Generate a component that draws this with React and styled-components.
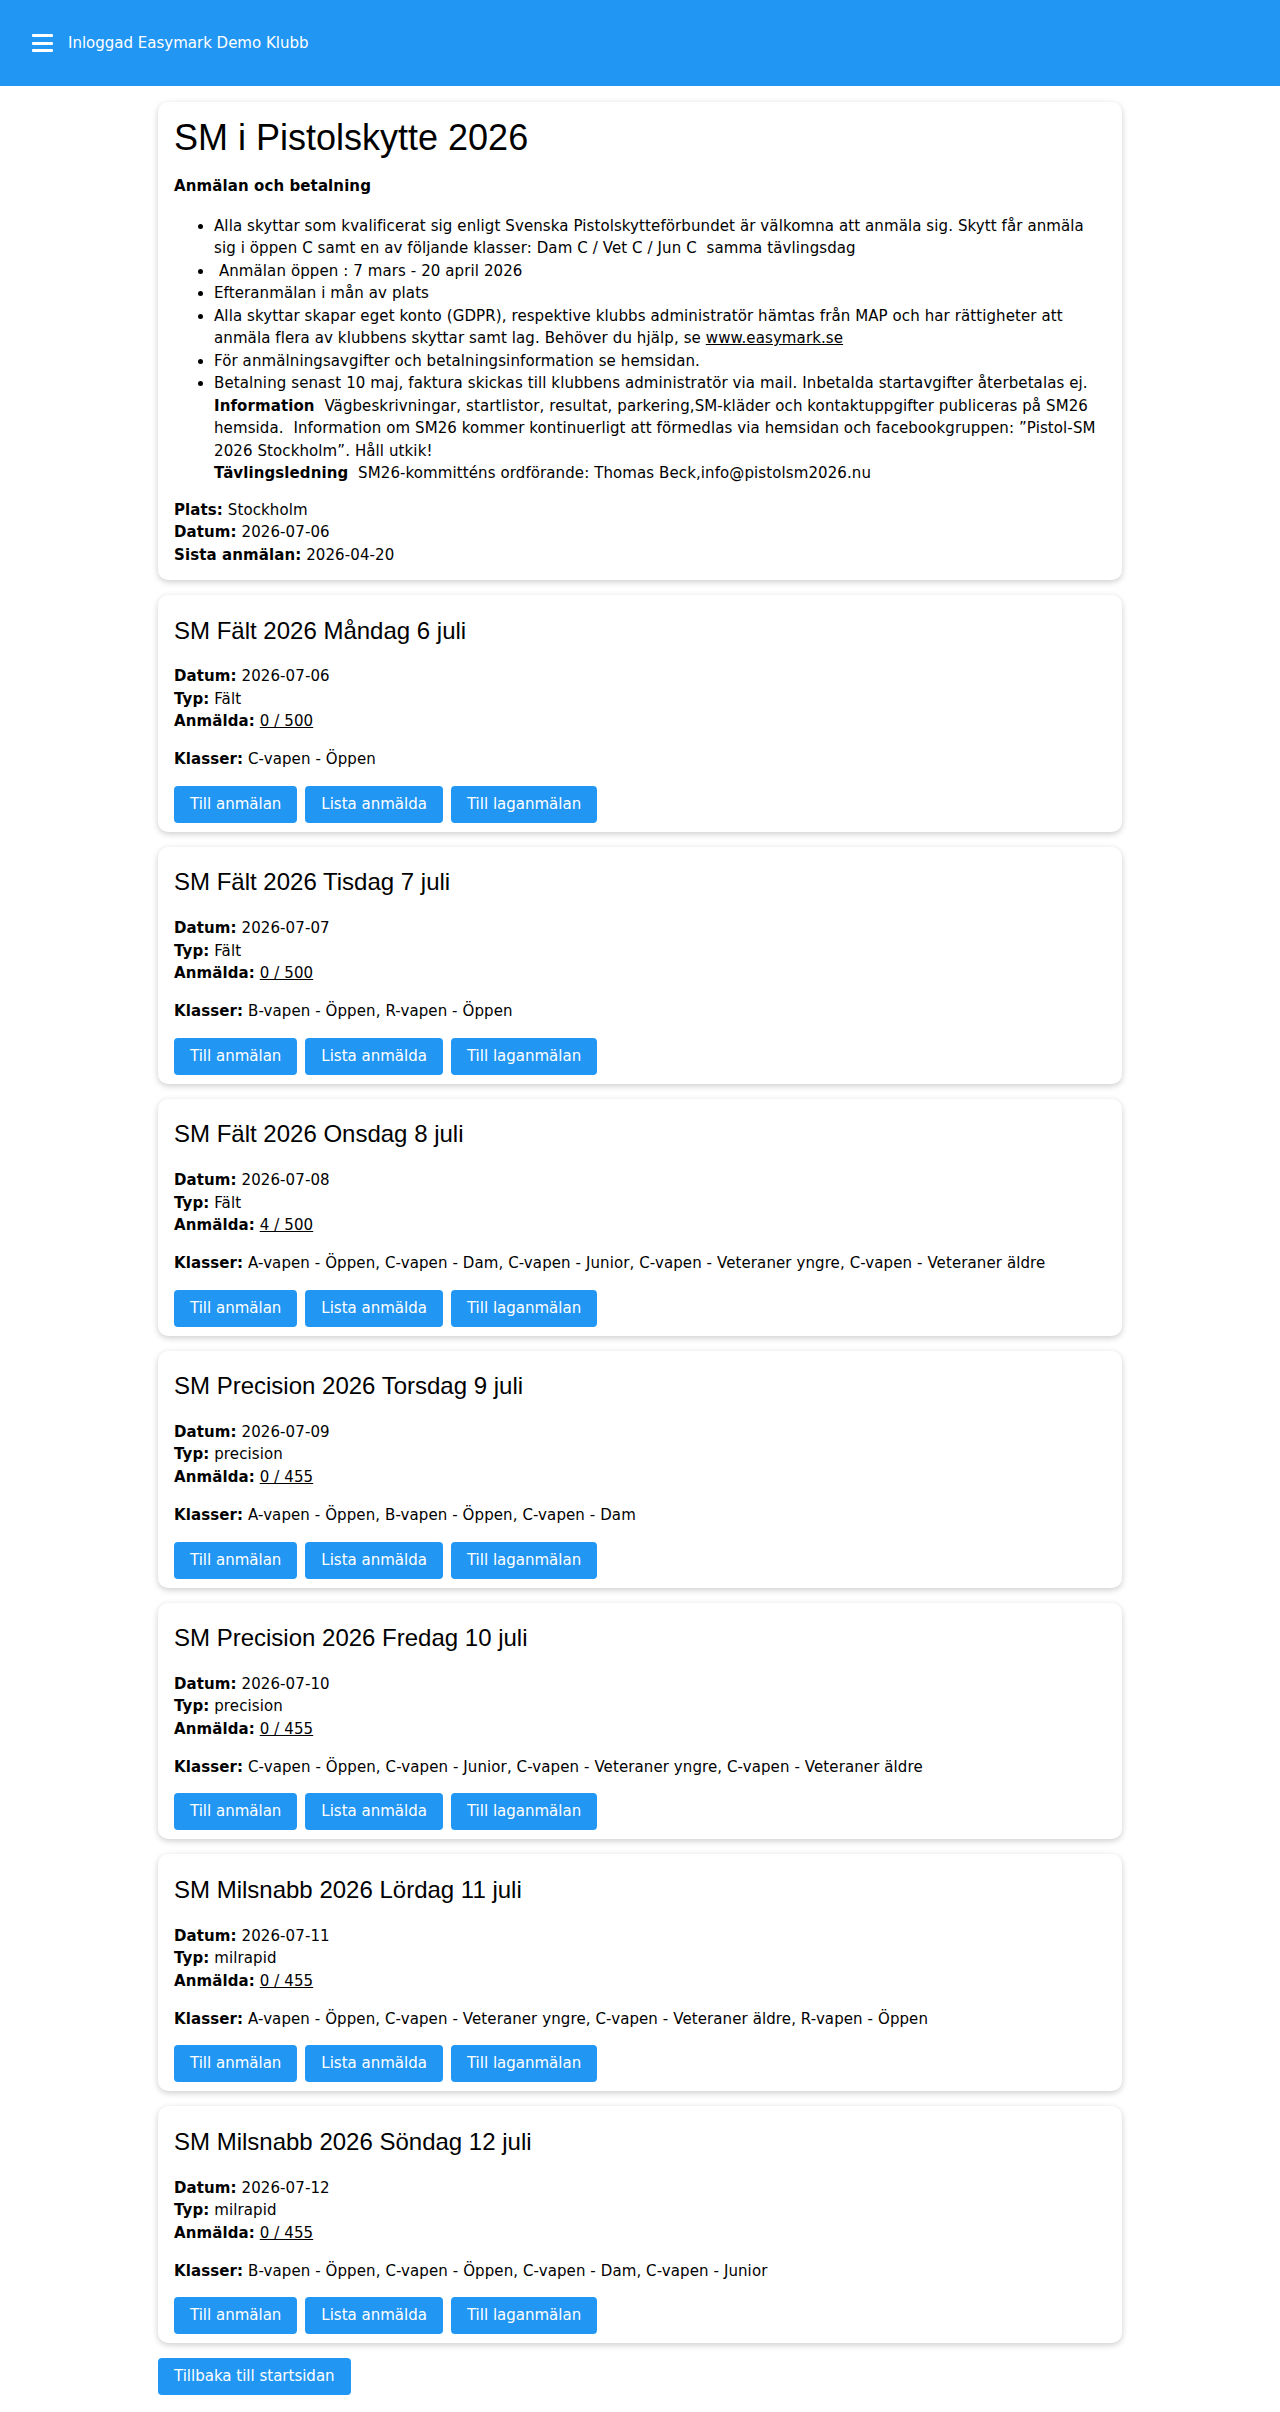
import React from 'react';
import styled, { createGlobalStyle } from 'styled-components';

const GlobalStyle = createGlobalStyle`
  body {
    margin: 0;
    background: #fff;
    color: #000;
    font-family: "DejaVu Sans", Verdana, sans-serif;
    font-size: 15px;
    line-height: 1.5;
    letter-spacing: 0.1px;
  }
`;

const TopBar = styled.header`
  height: 86px;
  background: #2196f3;
  display: flex;
  align-items: center;
  padding-left: 32px;
  gap: 15px;
  color: #fff;
`;

const MenuIcon = styled.div`
  width: 21px;
  height: 18px;
  display: flex;
  flex-direction: column;
  justify-content: space-between;

  span {
    display: block;
    height: 3px;
    border-radius: 1px;
    background: #fff;
  }
`;

const TopTitle = styled.div`
  font-size: 15px;
  line-height: 20px;
  letter-spacing: 0;
`;

const Main = styled.main`
  width: 964px;
  margin: 16px auto 0;
  padding-bottom: 17px;
  display: flex;
  flex-direction: column;
  gap: 15px;
`;

const Card = styled.section`
  background: #fff;
  border-radius: 10px;
  box-shadow: 0 2px 6px rgba(0, 0, 0, 0.2);
  padding: ${p => (p.$intro ? '16px 16px 14px' : '21.5px 16px 9px')};
`;

const Title = styled.h1`
  margin: 0 0 ${p => (p.$big ? '17px' : '20px')};
  font-family: "Liberation Sans", Arial, sans-serif;
  font-weight: 400;
  letter-spacing: 0;
  font-size: ${p => (p.$big ? '36px' : '24px')};
  line-height: ${p => (p.$big ? '40px' : '1.2')};
`;

const Lead = styled.p`
  margin: 0 0 17px;
  font-weight: 700;
`;

const Bullets = styled.ul`
  margin: 0 0 14px;
  padding-left: 40px;
`;

const Line = styled.div``;

const Block = styled.div`
  margin-bottom: ${p => p.$gap || '0'};
`;

const Link = styled.a`
  color: #000;
  text-decoration: underline;
`;

const Actions = styled.div`
  display: flex;
  gap: 8px;
  margin-top: 15px;
`;

const Button = styled.button`
  background: #2196f3;
  color: #fff;
  border: none;
  border-radius: 4px;
  padding: 8px 16px;
  font-family: "DejaVu Sans", Verdana, sans-serif;
  font-size: 15px;
  line-height: 21px;
  letter-spacing: 0;
  cursor: pointer;
`;

const BackButton = styled(Button)`
  align-self: flex-start;
`;

const events = [
  { title: 'SM Fält 2026 Måndag 6 juli', date: '2026-07-06', type: 'Fält', count: '0 / 500', classes: 'C-vapen - Öppen' },
  { title: 'SM Fält 2026 Tisdag 7 juli', date: '2026-07-07', type: 'Fält', count: '0 / 500', classes: 'B-vapen - Öppen, R-vapen - Öppen' },
  { title: 'SM Fält 2026 Onsdag 8 juli', date: '2026-07-08', type: 'Fält', count: '4 / 500', classes: 'A-vapen - Öppen, C-vapen - Dam, C-vapen - Junior, C-vapen - Veteraner yngre, C-vapen - Veteraner äldre' },
  { title: 'SM Precision 2026 Torsdag 9 juli', date: '2026-07-09', type: 'precision', count: '0 / 455', classes: 'A-vapen - Öppen, B-vapen - Öppen, C-vapen - Dam' },
  { title: 'SM Precision 2026 Fredag 10 juli', date: '2026-07-10', type: 'precision', count: '0 / 455', classes: 'C-vapen - Öppen, C-vapen - Junior, C-vapen - Veteraner yngre, C-vapen - Veteraner äldre' },
  { title: 'SM Milsnabb 2026 Lördag 11 juli', date: '2026-07-11', type: 'milrapid', count: '0 / 455', classes: 'A-vapen - Öppen, C-vapen - Veteraner yngre, C-vapen - Veteraner äldre, R-vapen - Öppen' },
  { title: 'SM Milsnabb 2026 Söndag 12 juli', date: '2026-07-12', type: 'milrapid', count: '0 / 455', classes: 'B-vapen - Öppen, C-vapen - Öppen, C-vapen - Dam, C-vapen - Junior' },
];

function EventCard({ ev }) {
  return (
    <Card>
      <Title as="h2">{ev.title}</Title>
      <Block $gap="15.6px">
        <Line><b>Datum:</b> {ev.date}</Line>
        <Line><b>Typ:</b> {ev.type}</Line>
        <Line><b>Anmälda:</b> <Link href="#">{ev.count}</Link></Line>
      </Block>
      <Line><b>Klasser:</b> {ev.classes}</Line>
      <Actions>
        <Button>Till anmälan</Button>
        <Button>Lista anmälda</Button>
        <Button>Till laganmälan</Button>
      </Actions>
    </Card>
  );
}

export default function App() {
  return (
    <>
      <GlobalStyle />
      <TopBar>
        <MenuIcon><span /><span /><span /></MenuIcon>
        <TopTitle>Inloggad Easymark Demo Klubb</TopTitle>
      </TopBar>
      <Main>
        <Card $intro>
          <Title $big>SM i Pistolskytte 2026</Title>
          <Lead>Anmälan och betalning</Lead>
          <Bullets>
            <li>Alla skyttar som kvalificerat sig enligt Svenska Pistolskytteförbundet är välkomna att anmäla sig. Skytt får anmäla sig i öppen C samt en av följande klasser: Dam C / Vet C / Jun C {'\u00a0'}samma tävlingsdag</li>
            <li>{'\u00a0'}Anmälan öppen : 7 mars - 20 april 2026</li>
            <li>Efteranmälan i mån av plats</li>
            <li>Alla skyttar skapar eget konto (GDPR), respektive klubbs administratör hämtas från MAP och har rättigheter att anmäla flera av klubbens skyttar samt lag. Behöver du hjälp, se <Link href="#">www.easymark.se</Link></li>
            <li>För anmälningsavgifter och betalningsinformation se hemsidan.</li>
            <li>
              Betalning senast 10 maj, faktura skickas till klubbens administratör via mail. Inbetalda startavgifter återbetalas ej.
              <br />
              <b>Information</b>{'\u00a0 '}Vägbeskrivningar, startlistor, resultat, parkering,SM-kläder och kontaktuppgifter publiceras på SM26 hemsida.{'\u00a0 '}Information om SM26 kommer kontinuerligt att förmedlas via hemsidan och facebookgruppen: ”Pistol-SM 2026 Stockholm”. Håll utkik!
              <br />
              <b>Tävlingsledning</b>{'\u00a0 '}SM26-kommitténs ordförande: Thomas Beck,info@pistolsm2026.nu
            </li>
          </Bullets>
          <Line><b>Plats:</b> Stockholm</Line>
          <Line><b>Datum:</b> 2026-07-06</Line>
          <Line><b>Sista anmälan:</b> 2026-04-20</Line>
        </Card>
        {events.map(ev => <EventCard key={ev.title} ev={ev} />)}
        <BackButton>Tillbaka till startsidan</BackButton>
      </Main>
    </>
  );
}
